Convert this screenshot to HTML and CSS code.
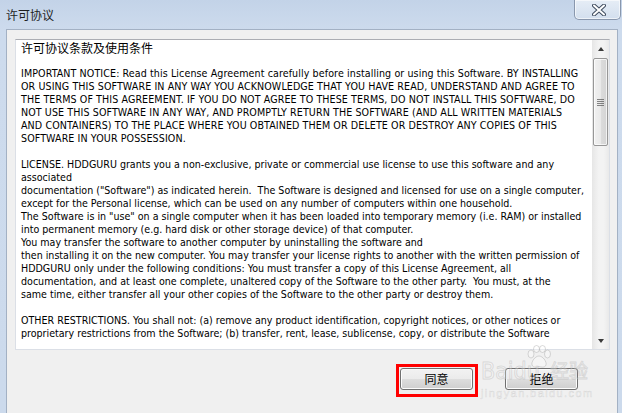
FILE: index.html
```html
<!DOCTYPE html>
<html>
<head>
<meta charset="utf-8">
<link rel="stylesheet" href="styles.css">
</head>
<body>
<div class="window">
  <div class="titlebar">
    <span class="title">许可协议</span>
    <button class="close" aria-label="关闭">
      <svg width="14" height="12" viewBox="0 0 14 12">
        <path d="M2 1.5 L12 10.5 M12 1.5 L2 10.5" stroke="#3e4b5e" stroke-width="4" stroke-linecap="round" fill="none"/>
        <path d="M2 1.5 L12 10.5 M12 1.5 L2 10.5" stroke="#ffffff" stroke-width="2" stroke-linecap="round" fill="none"/>
      </svg>
    </button>
  </div>
  <div class="client">
    <div class="textbox">
      <div class="content">
        <div class="heading">许可协议条款及使用条件</div>
        <p class="caps">IMPORTANT NOTICE: Read this License Agreement carefully before installing or using this Software. BY INSTALLING<br>OR USING THIS SOFTWARE IN ANY WAY YOU ACKNOWLEDGE THAT YOU HAVE READ, UNDERSTAND AND AGREE TO<br>THE TERMS OF THIS AGREEMENT. IF YOU DO NOT AGREE TO THESE TERMS, DO NOT INSTALL THIS SOFTWARE, DO<br>NOT USE THIS SOFTWARE IN ANY WAY, AND PROMPTLY RETURN THE SOFTWARE (AND ALL WRITTEN MATERIALS<br>AND CONTAINERS) TO THE PLACE WHERE YOU OBTAINED THEM OR DELETE OR DESTROY ANY COPIES OF THIS<br>SOFTWARE IN YOUR POSSESSION.</p>
        <p>LICENSE. HDDGURU grants you a non-exclusive, private or commercial use license to use this software and any<br>associated<br>documentation ("Software") as indicated herein.&nbsp; The Software is designed and licensed for use on a single computer,<br>except for the Personal license, which can be used on any number of computers within one household.<br>The Software is in "use" on a single computer when it has been loaded into temporary memory (i.e. RAM) or installed<br>into permanent memory (e.g. hard disk or other storage device) of that computer.<br>You may transfer the software to another computer by uninstalling the software and<br>then installing it on the new computer. You may transfer your license rights to another with the written permission of<br>HDDGURU only under the following conditions: You must transfer a copy of this License Agreement, all<br>documentation, and at least one complete, unaltered copy of the Software to the other party.&nbsp; You must, at the<br>same time, either transfer all your other copies of the Software to the other party or destroy them.</p>
        <p>OTHER RESTRICTIONS. You shall not: (a) remove any product identification, copyright notices, or other notices or<br>proprietary restrictions from the Software; (b) transfer, rent, lease, sublicense, copy, or distribute the Software</p>
      </div>
      <div class="scrollbar">
        <div class="sb-btn"><span class="arrow up"></span></div>
        <div class="thumb"><span class="grip"></span></div>
        <div class="track"></div>
        <div class="sb-btn"><span class="arrow down"></span></div>
      </div>
    </div>
    <div class="actions">
      <span class="highlight"><button class="btn">同意</button></span>
      <button class="btn">拒绝</button>
    </div>
  </div>
  <div class="watermark">
    <div class="wm-row">
      <span class="wm-latin">Baidu</span>
      <svg class="paw" width="26" height="24" viewBox="0 0 26 24">
        <g fill="rgba(255,255,255,0.35)" stroke="rgba(150,150,150,0.35)" stroke-width="1">
          <ellipse cx="5" cy="9" rx="3" ry="4"/>
          <ellipse cx="10.5" cy="4" rx="3" ry="3.5"/>
          <ellipse cx="16.5" cy="4" rx="3" ry="3.5"/>
          <ellipse cx="21.5" cy="9" rx="3" ry="4"/>
          <path d="M13 11 C9 11 5 17 6 20 C7 23 11 22 13 21.5 C15 22 19 23 20 20 C21 17 17 11 13 11 Z"/>
        </g>
      </svg>
      <span class="wm-cjk">经验</span>
    </div>
    <span class="wm-small">jingyan.baidu.com</span>
  </div>
</div>
</body>
</html>
```

FILE: styles.css
```css
* { box-sizing: border-box; }
html, body { margin: 0; padding: 0; }
body {
  width: 622px;
  height: 413px;
  overflow: hidden;
  font-family: "DejaVu Sans Condensed", "DejaVu Sans", "Noto Sans CJK SC", sans-serif;
}
.window {
  position: relative;
  width: 622px;
  height: 413px;
  display: flex;
  flex-direction: column;
  background: linear-gradient(#c3d3e8, #cddbed 30px, #ccdaec);
  padding: 0 4px 0 6px;
}
.titlebar {
  height: 29px;
  flex: none;
  display: flex;
  align-items: flex-start;
  justify-content: space-between;
}
.title {
  font-family: "Noto Sans CJK SC", sans-serif;
  font-size: 12px;
  line-height: 14px;
  margin-top: 8px;
  color: #1e1e1e;
}
.close {
  width: 47px;
  height: 20px;
  margin-right: -3px;
  border: 1px solid #8997ad;
  border-top: none;
  border-radius: 0 0 5px 5px;
  background: linear-gradient(#e6edf6, #d3dfee);
  box-shadow: inset 0 0 0 1px rgba(255,255,255,0.6);
  padding: 0;
  display: flex;
  align-items: center;
  justify-content: center;
}
.close svg { display: block; margin-left: 3px; }
.client {
  flex: 1;
  background: #f0f0f0;
  border-top: 1px solid #a3b1c4;
  border-left: 1px solid #a3b1c4;
  border-right: 1px solid #a3b1c4;
  padding: 9px 8px 0 8px;
  display: flex;
  flex-direction: column;
}
.textbox {
  height: 311px;
  width: 595px;
  background: #fff;
  border: 1px solid #dbdfe6;
  border-top-color: #abadb3;
  display: flex;
}
.content {
  flex: 1;
  overflow: hidden;
  padding: 0 0 0 5px;
  font-size: 10.6px;
  line-height: 13px;
  color: #000;
  white-space: nowrap;
}
.heading {
  font-family: "Noto Sans CJK SC", sans-serif;
  font-size: 12px;
  line-height: 16px;
  margin-bottom: 11px;
}
.content p { margin: 0 0 13px 0; }
.content p.caps { letter-spacing: 0.1px; }
.scrollbar {
  width: 17px;
  flex: none;
  display: flex;
  flex-direction: column;
  background: linear-gradient(90deg, #e6e6e6, #f3f3f3 40%, #f3f3f3 70%, #e9e9e9);
}
.sb-btn {
  height: 17px;
  flex: none;
  display: flex;
  align-items: center;
  justify-content: center;
}
.arrow {
  width: 0;
  height: 0;
  border-left: 3.5px solid transparent;
  border-right: 3.5px solid transparent;
}
.arrow.up { border-bottom: 4px solid #3a3a3a; }
.arrow.down { border-top: 4px solid #3a3a3a; }
.thumb {
  height: 88px;
  flex: none;
  margin: 1px 1px 0 1px;
  border: 1px solid #979797;
  border-radius: 2px;
  background: linear-gradient(90deg, #f1f1f1, #e9e9e9 50%, #dcdcdc 51%, #d4d4d4);
  box-shadow: inset 0 0 0 1px rgba(255,255,255,0.7);
  display: flex;
  align-items: center;
  justify-content: center;
}
.grip {
  width: 7px;
  height: 7px;
  background: repeating-linear-gradient(#555 0 1px, transparent 1px 2px);
  opacity: 0.7;
}
.track { flex: 1; }
.actions {
  display: flex;
  justify-content: flex-end;
  align-items: flex-start;
  gap: 27px;
  margin-top: 14px;
  padding-right: 31px;
}
.highlight {
  display: inline-flex;
  border: 3px solid #ff0000;
  padding: 1px 2px 4px 1px;
}
.btn {
  width: 73px;
  height: 22px;
  border: 1px solid #707070;
  border-radius: 3px;
  background: linear-gradient(#f2f2f2, #ebebeb 50%, #dddddd 51%, #cfcfcf);
  box-shadow: inset 0 0 0 1px #fcfcfc;
  font-family: "Noto Sans CJK SC", sans-serif;
  font-size: 12px;
  color: #000;
  padding: 0;
  line-height: 18px;
}
.actions > .btn { margin-top: 4px; }
.watermark {
  position: absolute;
  left: 481px;
  top: 343px;
  display: flex;
  flex-direction: column;
  align-items: flex-start;
  pointer-events: none;
}
.wm-row {
  display: flex;
  align-items: flex-end;
  height: 40px;
}
.wm-latin {
  font-family: "Liberation Sans Narrow", "DejaVu Sans Condensed", sans-serif;
  font-size: 23px;
  line-height: 24px;
  color: rgba(255,255,255,0.3);
  -webkit-text-stroke: 1px rgba(150,150,150,0.28);
}
.paw {
  display: block;
  margin: 0 0 14px -14px;
}
.wm-cjk {
  font-family: "Noto Sans CJK SC", sans-serif;
  font-size: 19px;
  line-height: 22px;
  margin-left: -2px;
  margin-bottom: 2px;
  color: rgba(255,255,255,0.3);
  -webkit-text-stroke: 1px rgba(150,150,150,0.28);
}
.wm-small {
  font-family: "Liberation Sans", sans-serif;
  font-size: 11px;
  line-height: 12px;
  margin-top: 4px;
  letter-spacing: 1.4px;
  color: rgba(255,255,255,0.3);
  -webkit-text-stroke: 0.5px rgba(150,150,150,0.28);
}
```
